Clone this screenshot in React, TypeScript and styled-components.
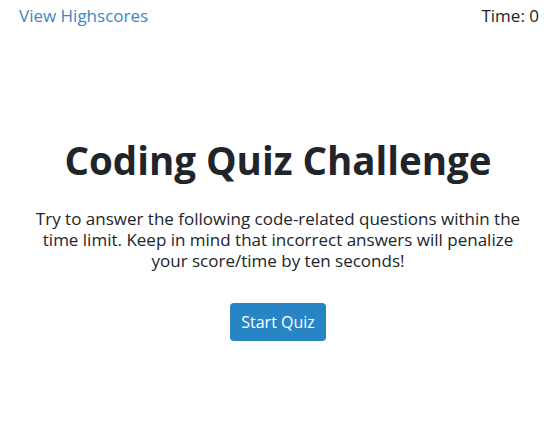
import React from 'react';
import styled, { createGlobalStyle } from 'styled-components';

const GlobalStyle = createGlobalStyle`
  body {
    margin: 0;
    background: #fff;
    font-family: 'Open Sans', 'Noto Sans', sans-serif;
    color: #212529;
  }
`;

const Page = styled.div`
  width: 556px;
  height: 427px;
  display: flex;
  flex-direction: column;
`;

const TopBar = styled.header`
  display: flex;
  justify-content: space-between;
  align-items: center;
  padding: 4px 17px 0 19px;
  font-size: 17px;
`;

const HighscoreLink = styled.a`
  color: #3a87c9;
  text-decoration: none;
  cursor: pointer;
`;

const Timer = styled.span`
  color: #212529;
`;

const Intro = styled.main`
  display: flex;
  flex-direction: column;
  align-items: center;
  text-align: center;
  padding-top: 110px;
`;

const Title = styled.h1`
  margin: 0 0 25px;
  font-size: 38.5px;
  font-weight: 700;
  line-height: 1.2;
`;

const Description = styled.p`
  margin: 0 0 32px;
  font-size: 17px;
  line-height: 21px;
`;

const StartButton = styled.button`
  background: #2785c6;
  color: #fff;
  border: none;
  border-radius: 4px;
  padding: 0 11px;
  height: 38px;
  font-family: inherit;
  font-size: 16px;
  cursor: pointer;
`;

export default function App() {
  return (
    <>
      <GlobalStyle />
      <Page>
        <TopBar>
          <HighscoreLink>View Highscores</HighscoreLink>
          <Timer>Time: 0</Timer>
        </TopBar>
        <Intro>
          <Title>Coding Quiz Challenge</Title>
          <Description>
            Try to answer the following code-related questions within the
            <br />
            time limit. Keep in mind that incorrect answers will penalize
            <br />
            your score/time by ten seconds!
          </Description>
          <StartButton>Start Quiz</StartButton>
        </Intro>
      </Page>
    </>
  );
}
